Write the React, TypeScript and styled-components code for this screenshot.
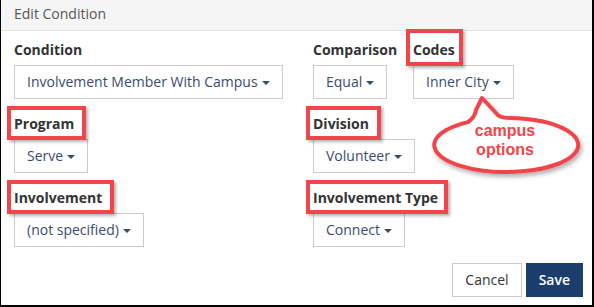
import React from 'react';
import styled, { createGlobalStyle } from 'styled-components';

const red = '#f1454b';

const GlobalStyle = createGlobalStyle`
  html, body {
    margin: 0;
    padding: 0;
    background: #fff;
  }
  body {
    font-family: 'Open Sans', 'Liberation Sans', sans-serif;
    font-size: 14px;
    line-height: 20px;
    color: #333;
  }
`;

const Modal = styled.div`
  position: relative;
  box-sizing: border-box;
  width: 594px;
  height: 307px;
  display: flex;
  flex-direction: column;
  background: #fff;
  border-left: 1px solid #000;
  border-right: 2px solid #000;
  border-bottom: 2px solid #000;
`;

const Header = styled.div`
  height: 31px;
  box-sizing: border-box;
  padding: 4px 13px 0;
  background: #f5f5f5;
  border-bottom: 1px solid #e3e3e3;
`;

const Title = styled.span`
  font-size: 14px;
  color: #555;
`;

const Body = styled.div`
  padding: 9px 13px 0;
  display: grid;
  grid-template-columns: 299px 1fr;
  row-gap: 15px;
`;

const Group = styled.div`
  display: flex;
`;

const Field = styled.div<{ $width?: number }>`
  display: flex;
  flex-direction: column;
  align-items: flex-start;
  width: ${p => (p.$width ? `${p.$width}px` : 'auto')};
`;

const Label = styled.label`
  font-weight: 700;
  color: #333;
  margin-bottom: 5px;
  white-space: nowrap;
`;

// red annotation frame drawn around a label
const Highlight = styled.span<{ $top?: number; $right?: number }>`
  position: relative;

  &::after {
    content: '';
    position: absolute;
    top: ${p => -(p.$top ?? 8)}px;
    left: -7px;
    right: ${p => -(p.$right ?? 12)}px;
    bottom: -7px;
    border: 4px solid ${red};
    box-shadow: 2px 2px 3px rgba(0, 0, 0, 0.3);
    pointer-events: none;
  }
`;

const DropdownButton = styled.button`
  display: inline-flex;
  align-items: center;
  box-sizing: border-box;
  height: 34px;
  padding: 6px 12px;
  border: 1px solid #ccc;
  border-radius: 0;
  background: #fff;
  font-family: inherit;
  font-size: 14px;
  line-height: 20px;
  color: #3a4c6c;
  white-space: nowrap;
`;

const Caret = styled.span`
  display: inline-block;
  margin-left: 4px;
  margin-top: 2px;
  width: 0;
  height: 0;
  border-top: 4px solid #3a4c6c;
  border-left: 4px solid transparent;
  border-right: 4px solid transparent;
`;

const Footer = styled.div`
  margin-top: auto;
  display: flex;
  justify-content: flex-end;
  gap: 4px;
  padding: 0 9px 8px 0;
`;

const Button = styled.button<{ $primary?: boolean }>`
  box-sizing: border-box;
  height: 34px;
  padding: 6px 12px;
  border: 1px solid ${p => (p.$primary ? '#1a3d6d' : '#ccc')};
  border-radius: 0;
  background: ${p => (p.$primary ? '#1a3d6d' : '#fff')};
  color: ${p => (p.$primary ? '#fff' : '#333')};
  font-family: inherit;
  font-size: 14px;
  font-weight: ${p => (p.$primary ? 600 : 400)};
  line-height: 20px;
`;

const Callout = styled.div`
  position: absolute;
  left: 420px;
  top: 90px;
  width: 170px;
  height: 95px;
`;

const CalloutText = styled.text`
  font-family: 'Liberation Sans', Arial, sans-serif;
  font-weight: 700;
  font-size: 16px;
  fill: ${red};
`;

const Dropdown: React.FC<{ value: string }> = ({ value }) => (
  <DropdownButton type="button">
    {value}
    <Caret />
  </DropdownButton>
);

export default function App() {
  return (
    <>
      <GlobalStyle />
      <Modal>
        <Header>
          <Title>Edit Condition</Title>
        </Header>
        <Body>
          <Field>
            <Label>Condition</Label>
            <Dropdown value="Involvement Member With Campus" />
          </Field>
          <Group>
            <Field $width={100}>
              <Label>Comparison</Label>
              <Dropdown value="Equal" />
            </Field>
            <Field>
              <Label>
                <Highlight $top={11} $right={8}>Codes</Highlight>
              </Label>
              <Dropdown value="Inner City" />
            </Field>
          </Group>

          <Field>
            <Label>
              <Highlight>Program</Highlight>
            </Label>
            <Dropdown value="Serve" />
          </Field>
          <Field>
            <Label>
              <Highlight>Division</Highlight>
            </Label>
            <Dropdown value="Volunteer" />
          </Field>

          <Field>
            <Label>
              <Highlight>Involvement</Highlight>
            </Label>
            <Dropdown value="(not specified)" />
          </Field>
          <Field>
            <Label>
              <Highlight $right={10}>Involvement Type</Highlight>
            </Label>
            <Dropdown value="Connect" />
          </Field>
        </Body>
        <Footer>
          <Button type="button">Cancel</Button>
          <Button type="button" $primary>
            Save
          </Button>
        </Footer>

        <Callout>
          <svg width="170" height="95" viewBox="0 0 170 95">
            <defs>
              <filter id="shadow" x="-10%" y="-10%" width="130%" height="140%">
                <feDropShadow dx="2" dy="3" stdDeviation="2" floodColor="#000" floodOpacity="0.3" />
              </filter>
            </defs>
            <path
              d="M47 32.1 Q54 27 55 20 L61 8 L75 23 Q78 28 88 28 A72 27 0 1 1 47 32.1 Z"
              fill="#fff"
              stroke={red}
              strokeWidth="4"
              strokeLinejoin="round"
              filter="url(#shadow)"
            />
            <CalloutText x="84" y="46" textAnchor="middle">
              campus
            </CalloutText>
            <CalloutText x="84" y="65" textAnchor="middle">
              options
            </CalloutText>
          </svg>
        </Callout>
      </Modal>
    </>
  );
}
